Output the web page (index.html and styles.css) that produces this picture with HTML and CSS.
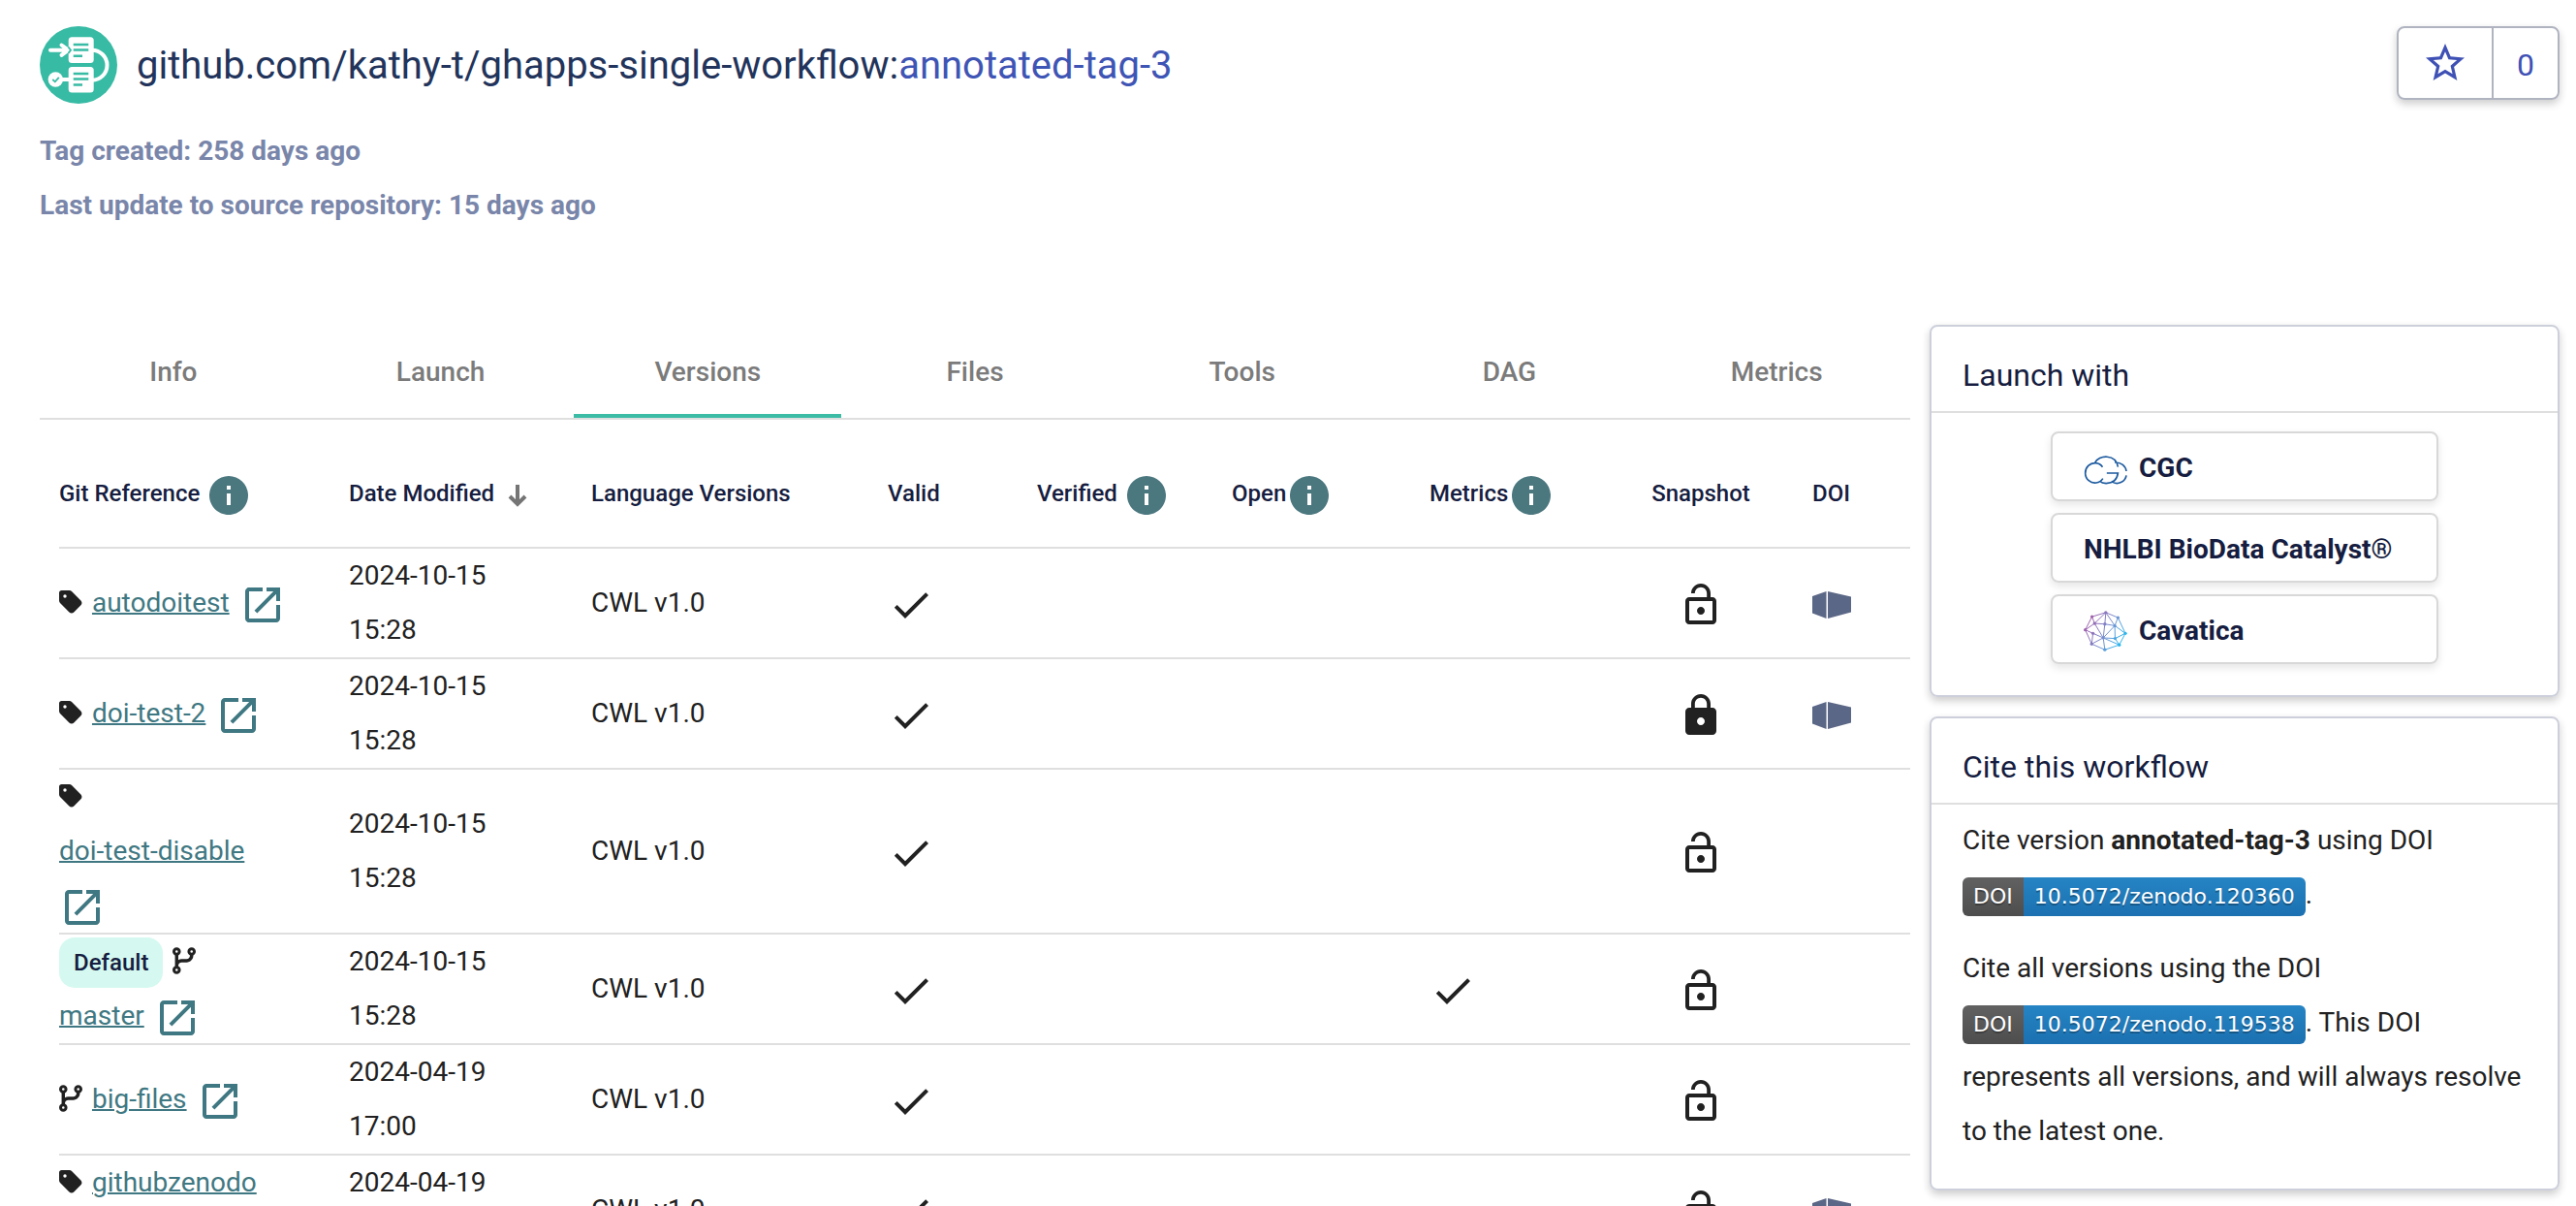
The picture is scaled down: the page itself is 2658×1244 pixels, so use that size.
FILE: index.html
```html
<!DOCTYPE html>
<html lang="en">
<head>
<meta charset="utf-8">
<title>github.com/kathy-t/ghapps-single-workflow:annotated-tag-3</title>
<link rel="stylesheet" href="styles.css">
</head>
<body>
<svg class="sprite" aria-hidden="true">
  <symbol id="info" viewBox="2 2 20 20"><path d="M12 2C6.48 2 2 6.48 2 12s4.48 10 10 10 10-4.48 10-10S17.52 2 12 2zm1 15h-2v-6h2v6zm0-8h-2V7h2v2z"/></symbol>
  <symbol id="open" viewBox="0 0 24 24"><path d="M19 19H5V5h7V3H5c-1.11 0-2 .9-2 2v14c0 1.1.89 2 2 2h14c1.1 0 2-.9 2-2v-7h-2v7zM14 3v2h3.59l-9.83 9.83 1.41 1.41L19 6.41V10h2V3h-7z"/></symbol>
  <symbol id="check" viewBox="0 0 24 24"><path d="M9 16.17 4.83 12l-1.42 1.41L9 19 21 7l-1.41-1.41z"/></symbol>
  <symbol id="lock-open" viewBox="0 0 24 24"><path d="M12 17c1.1 0 2-.9 2-2s-.9-2-2-2-2 .9-2 2 .9 2 2 2zm6-9h-1V6c0-2.76-2.24-5-5-5S7 3.24 7 6h1.9c0-1.71 1.39-3.1 3.1-3.1 1.71 0 3.1 1.39 3.1 3.1v2H6c-1.1 0-2 .9-2 2v10c0 1.1.9 2 2 2h12c1.1 0 2-.9 2-2V10c0-1.1-.9-2-2-2zm0 12H6V10h12v10z"/></symbol>
  <symbol id="lock" viewBox="0 0 24 24"><path d="M18 8h-1V6c0-2.76-2.24-5-5-5S7 3.24 7 6v2H6c-1.1 0-2 .9-2 2v10c0 1.1.9 2 2 2h12c1.1 0 2-.9 2-2V10c0-1.1-.9-2-2-2zm-6 9c-1.1 0-2-.9-2-2s.9-2 2-2 2 .9 2 2-.9 2-2 2zm3.1-9H8.9V6c0-1.71 1.39-3.1 3.1-3.1 1.71 0 3.1 1.39 3.1 3.1v2z"/></symbol>
  <symbol id="tag" viewBox="0 0 448 512"><path d="M0 80V229.500c0 17 6.700 33.300 18.700 45.300l176 176c25 25 65.500 25 90.500 0L418.700 317.300c25-25 25-65.500 0-90.500l-176-176c-12-12-28.300-18.700-45.300-18.700H48C21.500 32 0 53.500 0 80zm112 32a32 32 0 1 1 0 64 32 32 0 1 1 0-64z"/></symbol>
  <symbol id="branch" viewBox="0 0 448 512"><path d="M80 104a24 24 0 1 0 0-48 24 24 0 1 0 0 48zm80-24c0 32.800-19.700 61-48 73.300v87.800c18.800-10.900 40.700-17.100 64-17.100h96c35.300 0 64-28.700 64-64v-6.700C307.700 141 288 112.800 288 80c0-44.200 35.800-80 80-80s80 35.800 80 80c0 32.800-19.700 61-48 73.300V160c0 70.700-57.300 128-128 128H176c-35.300 0-64 28.700-64 64v6.700c28.300 12.300 48 40.500 48 73.300c0 44.200-35.800 80-80 80s-80-35.800-80-80c0-32.800 19.700-61 48-73.300V352 153.300C19.700 141 0 112.800 0 80C0 35.800 35.800 0 80 0s80 35.800 80 80zm232 0a24 24 0 1 0 -48 0 24 24 0 1 0 48 0zM80 456a24 24 0 1 0 0-48 24 24 0 1 0 0 48z"/></symbol>
  <symbol id="zenodo" viewBox="0 0 40 28"><path d="M0 5 14.500 0v28L0 22.500zM16 0l24 5.500v16L16 28z"/></symbol>
</svg>

<header class="page-header">
  <div class="title-row">
    <svg class="logo" viewBox="0 0 80 80" aria-hidden="true">
      <circle cx="40" cy="40" r="40" fill="#37bba4"/>
      <g fill="none" stroke="#fff" stroke-width="4" stroke-linecap="round" stroke-linejoin="round">
        <path d="M11 24.700H29M22.500 19.500l7 5.200-7 5.200"/>
        <path d="M54 24.700A15.500 15.500 0 0 1 54 55.700M16 55H31"/>
      </g>
      <rect x="29.700" y="11.300" width="26" height="26.700" rx="3.500" fill="#fff"/>
      <rect x="29.700" y="42" width="26" height="26.500" rx="3.500" fill="#fff"/>
      <circle cx="16.300" cy="55" r="7.700" fill="#fff"/>
      <path d="M34.700 19h15.600M34.700 24.500h15.600M34.700 30.700H44M34.700 49h15.600M34.700 54.500h15.600M34.700 60.500H44" stroke="#37bba4" stroke-width="2.400"/>
      <path d="M29.500 21.500l2.500 3.200-2.500 3.200M13.300 55l2.500 2.300 4-4.500" fill="none" stroke="#37bba4" stroke-width="1.800"/>
    </svg>
    <h1 class="title">github.com/kathy-t/ghapps-single-workflow:<span class="title-tag">annotated-tag-3</span></h1>
    <div class="star-group">
      <button class="star-button" type="button" aria-label="Star">
        <svg class="icon" viewBox="0 0 24 24"><path d="m22 9.240-7.190-.62L12 2 9.190 8.630 2 9.240l5.460 4.730L5.820 21 12 17.270 18.180 21l-1.630-7.030L22 9.240zM12 15.400l-3.760 2.270 1-4.280-3.320-2.880 4.380-.38L12 6.100l1.710 4.040 4.380.38-3.320 2.880 1 4.280L12 15.400z"/></svg>
      </button>
      <button class="star-count" type="button">0</button>
    </div>
  </div>
  <p class="meta">Tag created: 258 days ago</p>
  <p class="meta">Last update to source repository: 15 days ago</p>
</header>

<div class="layout">
  <main>
    <nav class="tabs">
      <button class="tab" type="button">Info</button>
      <button class="tab" type="button">Launch</button>
      <button class="tab tab-active" type="button">Versions</button>
      <button class="tab" type="button">Files</button>
      <button class="tab" type="button">Tools</button>
      <button class="tab" type="button">DAG</button>
      <button class="tab" type="button">Metrics</button>
    </nav>
    <div class="table-wrap">
    <table class="versions">
      <colgroup>
        <col class="col-ref"><col class="col-date"><col class="col-lang"><col class="col-valid"><col class="col-verified"><col class="col-open"><col class="col-metrics"><col class="col-snapshot"><col class="col-doi">
      </colgroup>
      <thead>
        <tr>
          <th>Git Reference <svg class="info"><use href="#info"/></svg></th>
          <th>Date Modified <svg class="sort" viewBox="0 0 24 24"><path d="M12 1v20M4 13l8 8 8-8" fill="none" stroke="currentColor" stroke-width="4"/></svg></th>
          <th>Language Versions</th>
          <th>Valid</th>
          <th>Verified <svg class="info"><use href="#info"/></svg></th>
          <th>Open<svg class="info"><use href="#info"/></svg></th>
          <th>Metrics<svg class="info"><use href="#info"/></svg></th>
          <th class="center">Snapshot</th>
          <th>DOI</th>
        </tr>
      </thead>
      <tbody>
        <tr>
          <td><svg class="ref-icon"><use href="#tag"/></svg> <a class="ref" href="#">autodoitest</a> <a class="ext" href="#" aria-label="Open autodoitest"><svg class="icon"><use href="#open"/></svg></a></td>
          <td>2024-10-15<br>15:28</td><td>CWL v1.0</td>
          <td><svg class="icon"><use href="#check"/></svg></td><td></td><td></td><td></td>
          <td class="center"><svg class="icon"><use href="#lock-open"/></svg></td>
          <td><svg class="zenodo"><use href="#zenodo"/></svg></td>
        </tr>
        <tr>
          <td><svg class="ref-icon"><use href="#tag"/></svg> <a class="ref" href="#">doi-test-2</a> <a class="ext" href="#" aria-label="Open doi-test-2"><svg class="icon"><use href="#open"/></svg></a></td>
          <td>2024-10-15<br>15:28</td><td>CWL v1.0</td>
          <td><svg class="icon"><use href="#check"/></svg></td><td></td><td></td><td></td>
          <td class="center"><svg class="icon"><use href="#lock"/></svg></td>
          <td><svg class="zenodo"><use href="#zenodo"/></svg></td>
        </tr>
        <tr>
          <td><svg class="ref-icon"><use href="#tag"/></svg><br><a class="ref" href="#">doi-test-disable</a><br><a class="ext" href="#" aria-label="Open doi-test-disable"><svg class="icon"><use href="#open"/></svg></a></td>
          <td>2024-10-15<br>15:28</td><td>CWL v1.0</td>
          <td><svg class="icon"><use href="#check"/></svg></td><td></td><td></td><td></td>
          <td class="center"><svg class="icon"><use href="#lock-open"/></svg></td>
          <td></td>
        </tr>
        <tr>
          <td><span class="default">Default</span> <svg class="ref-icon"><use href="#branch"/></svg><br><a class="ref" href="#">master</a> <a class="ext" href="#" aria-label="Open master"><svg class="icon"><use href="#open"/></svg></a></td>
          <td>2024-10-15<br>15:28</td><td>CWL v1.0</td>
          <td><svg class="icon"><use href="#check"/></svg></td><td></td><td></td><td><svg class="icon"><use href="#check"/></svg></td>
          <td class="center"><svg class="icon"><use href="#lock-open"/></svg></td>
          <td></td>
        </tr>
        <tr>
          <td><svg class="ref-icon"><use href="#branch"/></svg> <a class="ref" href="#">big-files</a> <a class="ext" href="#" aria-label="Open big-files"><svg class="icon"><use href="#open"/></svg></a></td>
          <td>2024-04-19<br>17:00</td><td>CWL v1.0</td>
          <td><svg class="icon"><use href="#check"/></svg></td><td></td><td></td><td></td>
          <td class="center"><svg class="icon"><use href="#lock-open"/></svg></td>
          <td></td>
        </tr>
        <tr>
          <td><svg class="ref-icon"><use href="#tag"/></svg> <a class="ref" href="#">githubzenodo</a><br><a class="ext" href="#" aria-label="Open githubzenodo"><svg class="icon"><use href="#open"/></svg></a></td>
          <td>2024-04-19<br>17:00</td><td>CWL v1.0</td>
          <td><svg class="icon"><use href="#check"/></svg></td><td></td><td></td><td></td>
          <td class="center"><svg class="icon"><use href="#lock-open"/></svg></td>
          <td><svg class="zenodo"><use href="#zenodo"/></svg></td>
        </tr>
      </tbody>
    </table>
    </div>
  </main>

  <aside class="side">
    <section class="card">
      <h2 class="card-title">Launch with</h2>
      <div class="launchers">
        <button class="launcher" type="button">
          <svg class="launcher-icon" viewBox="0 0 136 120"><path transform="translate(0 22)" fill="none" stroke="#1c5a9f" stroke-width="5" d="M59 34A30 31 0 1 0 60 70M35 21C47-4 100-8 107 34M97 20C117 19 131 31 133 47M133 60C130 80 106 92 88 80M72 53h35C104 74 90 85 70 85 62 85 54 82 50 78"/></svg>
          CGC
        </button>
        <button class="launcher" type="button">NHLBI BioData Catalyst®</button>
        <button class="launcher" type="button">
          <svg class="launcher-icon" viewBox="0 0 136 128">
            <defs><linearGradient id="cav" gradientUnits="userSpaceOnUse" x1="10" y1="30" x2="128" y2="95"><stop offset="0" stop-color="#a45ba9"/><stop offset=".55" stop-color="#7590d0"/><stop offset="1" stop-color="#1fbbf2"/></linearGradient></defs>
            <path fill="none" stroke="url(#cav)" stroke-width="3" d="M26 19 69 6l38 16 23 49-19 36-45 15-41-18L5 60zM26 19l8 21 35-34-3 36M69 6l28 41 10-25M5 60l29-20 32 2 31 5 33 24-32 16-1-40-36 38-27-45M66 42l-5 43 37 2 13 20-50-22 5 37M61 85l-36 19 4-33 32 14M5 60l24 11"/>
            <g fill="url(#cav)"><circle cx="26" cy="19" r="5"/><circle cx="69" cy="6" r="5"/><circle cx="107" cy="22" r="5"/><circle cx="130" cy="71" r="5"/><circle cx="111" cy="107" r="5"/><circle cx="66" cy="122" r="5"/><circle cx="25" cy="104" r="5"/><circle cx="5" cy="60" r="5"/><circle cx="34" cy="40" r="5"/><circle cx="66" cy="42" r="5"/><circle cx="97" cy="47" r="5"/><circle cx="29" cy="71" r="5"/><circle cx="61" cy="85" r="5"/><circle cx="98" cy="87" r="5"/></g>
          </svg>
          Cavatica
        </button>
      </div>
    </section>
    <section class="card">
      <h2 class="card-title">Cite this workflow</h2>
      <div class="cite">
        <p>Cite version <b>annotated-tag-3</b> using DOI<br><a class="badge" href="#"><span class="badge-key">DOI</span><span class="badge-value">10.5072/zenodo.120360</span></a>.</p>
        <p>Cite all versions using the DOI<br><a class="badge" href="#"><span class="badge-key">DOI</span><span class="badge-value">10.5072/zenodo.119538</span></a>. This DOI represents all versions, and will always resolve to the latest one.</p>
      </div>
    </section>
  </aside>
</div>
</body>
</html>
```
FILE: styles.css
```css
* { box-sizing: border-box; }

body {
  margin: 0;
  height: 100vh;
  overflow: hidden;
  padding: 27px 17px 0 41px;
  background: #fff;
  color: #212121;
  font-family: Roboto, "Liberation Sans", sans-serif;
  font-size: 28px;
  line-height: 56px;
}

h1, h2, p { margin: 0; font-weight: 400; }
button { font: inherit; color: inherit; background: none; border: 0; padding: 0; cursor: pointer; }
svg { fill: currentColor; }

.sprite { display: none; }
.icon { width: 48px; height: 48px; vertical-align: middle; }

/* Header */
.title-row { display: flex; align-items: center; gap: 20px; height: 80px; margin-bottom: 21px; }
.logo { width: 80px; height: 80px; flex: none; }
.title { flex: 1; padding-top: 2px; font-size: 40px; color: #22345b; }
.title-tag { color: #3f55b5; }
.meta { font-weight: 700; color: #7986aa; }

.star-group {
  display: flex;
  align-self: flex-start;
  height: 76px;
  border: 2px solid #b0b4c0;
  border-radius: 8px;
  color: #3f51b5;
  box-shadow: 0 4px 8px rgba(0, 0, 0, .2);
}
.star-button { display: flex; align-items: center; justify-content: center; width: 98px; border-right: 2px solid #b0b4c0; }
.star-count { width: 66px; padding-top: 4px; font-size: 32px; }

/* Page columns */
.layout { display: grid; grid-template-columns: minmax(0, 1fr) 650px; gap: 20px; margin-top: 95px; align-items: start; }

.tabs { display: grid; grid-template-columns: repeat(7, 1fr); border-bottom: 2px solid #dfdfdf; }
.tab { height: 96px; padding-top: 6px; font-weight: 500; color: #7b7b7b; border-bottom: 4px solid transparent; }
.tab-active { border-bottom-color: #3dbca5; }

/* Versions table */
.table-wrap { padding: 19px 0 0 20px; }
.versions { width: 100%; table-layout: fixed; border-spacing: 0; }
.versions th, .versions td { padding: 0; border-bottom: 2px solid #dfdfdf; text-align: left; vertical-align: middle; }
.versions th { height: 114px; padding-top: 2px; font-size: 24px; font-weight: 500; color: #161d40; white-space: nowrap; }
.versions .center { text-align: center; }
.col-ref { width: 299px; }
.col-date { width: 250px; }
.col-lang { width: 306px; }
.col-valid { width: 154px; }
.col-verified { width: 201px; }
.col-open { width: 204px; }
.col-metrics { width: 165px; }
.col-snapshot { width: 230px; }
.col-doi { width: 101px; }

.info { width: 40px; height: 40px; margin-left: 4px; vertical-align: middle; color: #4b777f; }
.sort { width: 24px; height: 24px; margin-left: 6px; vertical-align: middle; color: #757575; }
.ref-icon { width: 24px; height: 28px; margin-right: 3px; vertical-align: -4px; }
.ref { margin-right: 3px; color: #3f7882; text-decoration-thickness: 2px; }
.ext { color: #3f7882; }
.zenodo { width: 40px; height: 28px; vertical-align: middle; color: #5b6786; }
.default {
  display: inline-block;
  margin-right: 3px;
  padding: 0 15px;
  border-radius: 16px;
  background: #d5f9f0;
  color: #161d40;
  font-size: 24px;
  font-weight: 500;
  line-height: 52px;
}

/* Side cards */
.side { display: grid; gap: 20px; }
.card { border: 2px solid #cdd0db; border-radius: 8px; box-shadow: 0 4px 8px rgba(0, 0, 0, .2); }
.card-title { padding: 26px 32px 13px; border-bottom: 2px solid #dfdfdf; font-size: 32px; line-height: 48px; color: #161d40; }
.launchers { display: flex; flex-direction: column; align-items: center; gap: 12px; padding: 19px 0 32px; }
.launcher {
  display: flex;
  align-items: center;
  gap: 12px;
  width: 400px;
  height: 72px;
  padding: 3px 32px 0;
  border: 2px solid #d8d8d8;
  border-radius: 8px;
  box-shadow: 0 4px 8px rgba(0, 0, 0, .1);
  color: #161d40;
  font-weight: 700;
}
.launcher-icon { width: 45px; height: 44px; }
.cite { display: grid; gap: 20px; padding: 9px 32px 31px; }
.badge {
  display: inline-flex;
  border-radius: 6px;
  overflow: hidden;
  vertical-align: middle;
  color: #fff;
  font-family: "DejaVu Sans", sans-serif;
  font-size: 22px;
  line-height: 40px;
  text-decoration: none;
  text-shadow: 0 2px 0 rgba(1, 1, 1, .3);
}
.badge-key { padding: 0 11px; background: linear-gradient(#616161, #4d4d4d); }
.badge-value { padding: 0 11px; background: linear-gradient(#2684c4, #1b70b0); }
```
